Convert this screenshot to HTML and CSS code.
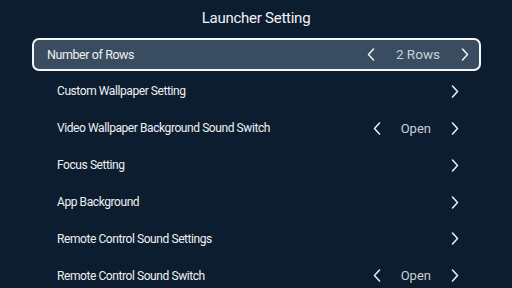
FILE: index.html
```html
<!DOCTYPE html>
<html>
<head>
<meta charset="utf-8">
<link rel="stylesheet" href="styles.css">
</head>
<body>
<div class="screen">
  <div class="title">Launcher Setting</div>
  <div class="list">
    <div class="row focused">
      <div class="box">
        <span class="label">Number of Rows</span>
        <div class="value-group">
          <svg class="chev" viewBox="0 0 8 13" width="8" height="13"><polyline points="6.5,1 1.5,6.5 6.5,12"/></svg>
          <span class="value">2 Rows</span>
          <svg class="chev" viewBox="0 0 8 13" width="8" height="13"><polyline points="1.5,1 6.5,6.5 1.5,12"/></svg>
        </div>
      </div>
    </div>
    <div class="row">
      <div class="box">
        <span class="label">Custom Wallpaper Setting</span>
        <svg class="chev" viewBox="0 0 8 13" width="8" height="13"><polyline points="1.5,1 6.5,6.5 1.5,12"/></svg>
      </div>
    </div>
    <div class="row">
      <div class="box">
        <span class="label">Video Wallpaper Background Sound Switch</span>
        <div class="value-group">
          <svg class="chev" viewBox="0 0 8 13" width="8" height="13"><polyline points="6.5,1 1.5,6.5 6.5,12"/></svg>
          <span class="value">Open</span>
          <svg class="chev" viewBox="0 0 8 13" width="8" height="13"><polyline points="1.5,1 6.5,6.5 1.5,12"/></svg>
        </div>
      </div>
    </div>
    <div class="row">
      <div class="box">
        <span class="label">Focus Setting</span>
        <svg class="chev" viewBox="0 0 8 13" width="8" height="13"><polyline points="1.5,1 6.5,6.5 1.5,12"/></svg>
      </div>
    </div>
    <div class="row">
      <div class="box">
        <span class="label">App Background</span>
        <svg class="chev" viewBox="0 0 8 13" width="8" height="13"><polyline points="1.5,1 6.5,6.5 1.5,12"/></svg>
      </div>
    </div>
    <div class="row">
      <div class="box">
        <span class="label">Remote Control Sound Settings</span>
        <svg class="chev" viewBox="0 0 8 13" width="8" height="13"><polyline points="1.5,1 6.5,6.5 1.5,12"/></svg>
      </div>
    </div>
    <div class="row">
      <div class="box">
        <span class="label">Remote Control Sound Switch</span>
        <div class="value-group">
          <svg class="chev" viewBox="0 0 8 13" width="8" height="13"><polyline points="6.5,1 1.5,6.5 6.5,12"/></svg>
          <span class="value">Open</span>
          <svg class="chev" viewBox="0 0 8 13" width="8" height="13"><polyline points="1.5,1 6.5,6.5 1.5,12"/></svg>
        </div>
      </div>
    </div>
  </div>
</div>
</body>
</html>
```
FILE: styles.css
```css
html, body {
  margin: 0;
  padding: 0;
  background: #0c1d30;
}
.screen {
  width: 512px;
  height: 288px;
  overflow: hidden;
  font-family: Roboto, "Noto Sans", sans-serif;
  color: #eef1f4;
}
.title {
  height: 36px;
  line-height: 36px;
  text-align: center;
  font-size: 15px;
  letter-spacing: -0.25px;
  color: #f0f3f6;
}
.list {
  display: flex;
  flex-direction: column;
}
.row {
  height: 36.9px;
  display: flex;
  align-items: center;
  padding: 0 42px 0 42px;
}
.box {
  flex: 1;
  display: flex;
  align-items: center;
  justify-content: space-between;
  padding: 0 11px 0 15px;
  height: 33px;
  box-sizing: border-box;
}
.row.focused {
  padding: 0 31px 0 32px;
}
.row.focused .box {
  background: #3a4d60;
  border: 2px solid #f4f6f8;
  border-radius: 7px;
  padding: 0 10px 0 13px;
}
.label {
  font-size: 12px;
  letter-spacing: -0.42px;
  color: #eef1f4;
}
.row.focused .label {
  font-size: 12.5px;
  letter-spacing: -0.42px;
}
.value-group {
  display: flex;
  align-items: center;
  gap: 20px;
}
.row.focused .value-group {
  gap: 21px;
}
.value {
  font-size: 13px;
  color: #c8d0d8;
}
.row.focused .value {
  font-size: 13.5px;
}
.chev {
  display: block;
  fill: none;
  stroke: #eef1f4;
  stroke-width: 1.5;
  stroke-linecap: round;
  stroke-linejoin: round;
}
```
